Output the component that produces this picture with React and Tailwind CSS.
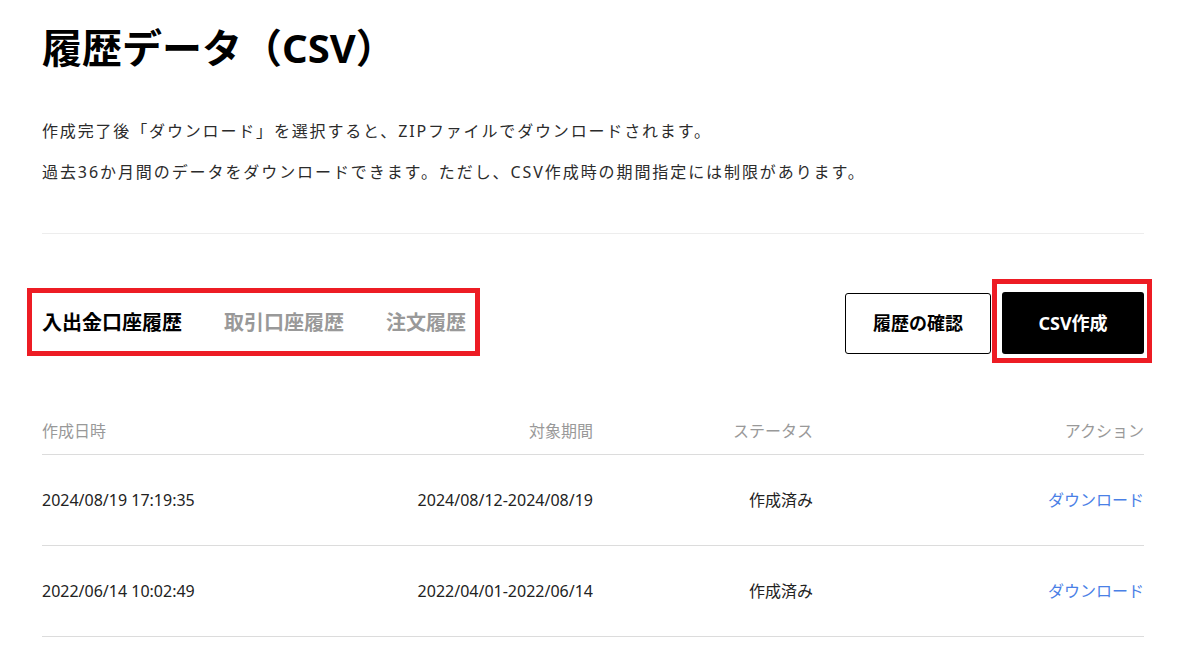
import React, { useState } from "react";

const rows = [
  { created: "2024/08/19 17:19:35", period: "2024/08/12-2024/08/19", status: "作成済み" },
  { created: "2022/06/14 10:02:49", period: "2022/04/01-2022/06/14", status: "作成済み" },
];

const tabs = ["入出金口座履歴", "取引口座履歴", "注文履歴"];

const App = () => {
  const [activeTab, setActiveTab] = useState(0);

  return (
    <div className="min-h-screen bg-white pl-[42px] pr-[44px] font-['Noto_Sans','Noto_Sans_CJK_JP',sans-serif] text-[#222]">
      {/* Title */}
      <h1 className="pt-[28px] text-[40px] leading-[40px] font-bold text-black">履歴データ（CSV）</h1>

      {/* Description */}
      <p className="mt-[51px] text-[16px] leading-6 tracking-[0.115em] text-[#2b2b2b]">
        作成完了後「ダウンロード」を選択すると、ZIPファイルでダウンロードされます。
      </p>
      <p className="mt-[17px] text-[16px] leading-6 tracking-[0.12em] text-[#2b2b2b]">
        過去36か月間のデータをダウンロードできます。ただし、CSV作成時の期間指定には制限があります。
      </p>

      <div className="mt-[49px] border-t border-[#ededed]" />

      {/* Tabs and actions */}
      <div className="mt-[58px] flex h-[62px] items-center justify-between">
        <div className="relative flex h-full items-center gap-[42px]">
          {tabs.map((tab, index) => (
            <button
              key={tab}
              type="button"
              onClick={() => setActiveTab(index)}
              className={`text-[20px] leading-7 font-bold ${
                activeTab === index ? "text-black" : "text-[#999]"
              }`}
            >
              {tab}
            </button>
          ))}
          <div className="pointer-events-none absolute top-[-4px] bottom-[-2px] left-[-15px] right-[-14px] border-[5px] border-[#ed1c24]" />
        </div>

        <div className="flex items-center gap-[11px]">
          <button
            type="button"
            className="h-[61px] w-[146px] rounded-[3px] border border-black bg-white text-[18px] font-bold text-black"
          >
            履歴の確認
          </button>
          <div className="relative">
            <button
              type="button"
              className="h-[62px] w-[142px] rounded-[3px] bg-black text-[18px] font-bold text-white"
            >
              CSV作成
            </button>
            <div className="pointer-events-none absolute top-[-13px] bottom-[-9px] left-[-10px] right-[-8px] border-[5px] border-[#ed1c24]" />
          </div>
        </div>
      </div>

      {/* History table */}
      <div className="mt-[65px]">
        <div className="grid grid-cols-[275px_276px_220px_1fr] border-b border-[#dcdcdc] pb-[11px] text-[16px] leading-6 text-[#999]">
          <div>作成日時</div>
          <div className="text-right">対象期間</div>
          <div className="text-right">ステータス</div>
          <div className="text-right">アクション</div>
        </div>
        {rows.map((row) => (
          <div
            key={row.created}
            className="grid h-[91px] grid-cols-[275px_276px_220px_1fr] items-center border-b border-[#dcdcdc] text-[16px] leading-6 text-[#222]"
          >
            <div>{row.created}</div>
            <div className="text-right">{row.period}</div>
            <div className="text-right">{row.status}</div>
            <div className="text-right">
              <a href="#" className="text-[#4a80e6]">
                ダウンロード
              </a>
            </div>
          </div>
        ))}
      </div>
    </div>
  );
};

export default App;
